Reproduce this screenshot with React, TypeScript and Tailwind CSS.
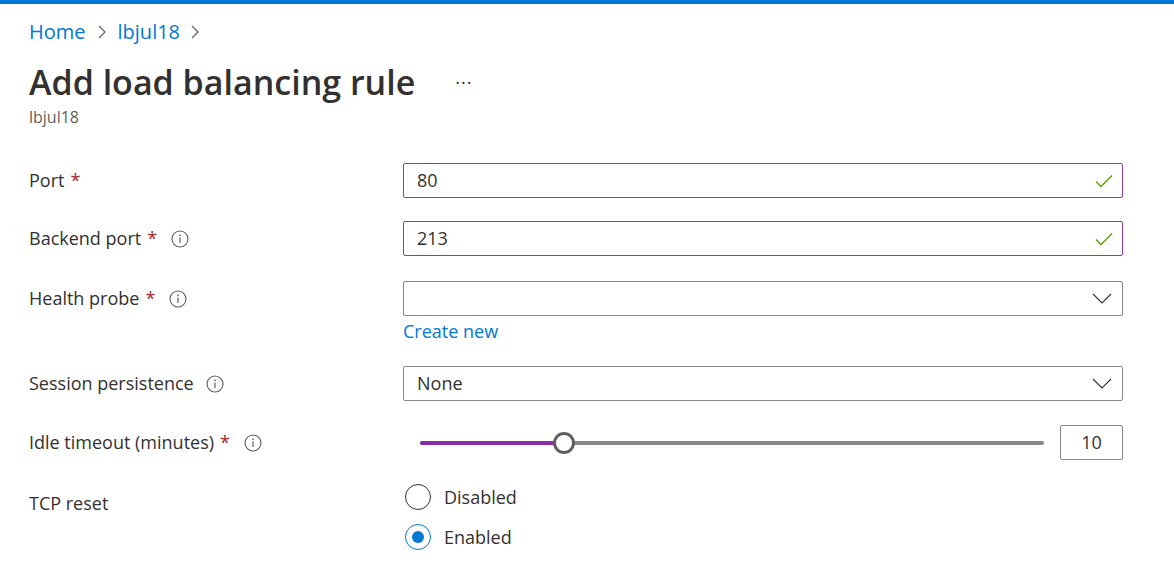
import React from 'react';

const font = { fontFamily: '"Open Sans", "Noto Sans", sans-serif' };

function Info() {
  return (
    <svg width="18" height="18" viewBox="0 0 18 18" className="shrink-0">
      <circle cx="9" cy="9" r="8" fill="none" stroke="#605e5c" strokeWidth="1.1" />
      <circle cx="9" cy="5.3" r="0.9" fill="#605e5c" />
      <line x1="9" y1="7.6" x2="9" y2="13" stroke="#605e5c" strokeWidth="1.2" />
    </svg>
  );
}

function Check() {
  return (
    <svg width="20" height="16" viewBox="0 0 20 16">
      <path d="M2 8.5 L7 13.5 L18 2.5" fill="none" stroke="#57a300" strokeWidth="1.4" />
    </svg>
  );
}

function Chevron() {
  return (
    <svg width="20" height="11" viewBox="0 0 20 11">
      <path d="M1 1 L10 10 L19 1" fill="none" stroke="#323130" strokeWidth="1.1" />
    </svg>
  );
}

function Crumb() {
  return (
    <svg width="10" height="16" viewBox="0 0 10 16">
      <path d="M2 2 L8 8 L2 14" fill="none" stroke="#605e5c" strokeWidth="1.2" />
    </svg>
  );
}

function Label({ text, required, info }: { text: string; required?: boolean; info?: boolean }) {
  return (
    <div className="w-[374px] shrink-0 h-[35px] flex items-center text-[18px] text-[#323130]">
      <span>{text}</span>
      {required && <span className="text-[#a4262c] ml-[6px]">*</span>}
      {info && (
        <span className={required ? 'ml-[14px] flex' : 'ml-[12px] flex'}>
          <Info />
        </span>
      )}
    </div>
  );
}

function TextBox({ value }: { value: string }) {
  return (
    <div className="flex-1 h-[35px] border border-[#8a3da8] rounded-[2px] flex items-center justify-between pl-[13px] pr-[8px] text-[18px] text-[#323130]">
      <span>{value}</span>
      <Check />
    </div>
  );
}

function Dropdown({ value }: { value: string }) {
  return (
    <div className="flex-1 h-[35px] border border-[#8a8886] rounded-[2px] flex items-center justify-between pl-[13px] pr-[10px] text-[18px] text-[#323130]">
      <span>{value}</span>
      <Chevron />
    </div>
  );
}

function Radio({ label, checked }: { label: string; checked?: boolean }) {
  return (
    <div className="flex items-center h-[40px] pl-[2px] text-[18px] text-[#323130]">
      <span
        className={
          checked
            ? 'w-[26px] h-[26px] rounded-full border border-[#0078d4] flex items-center justify-center'
            : 'w-[26px] h-[26px] rounded-full border border-[#323130] flex items-center justify-center'
        }
      >
        {checked && <span className="w-[12px] h-[12px] rounded-full bg-[#0078d4]" />}
      </span>
      <span className="ml-[13px]">{label}</span>
    </div>
  );
}

export default function App() {
  return (
    <div className="w-[1174px] h-[574px] bg-white overflow-hidden" style={font}>
      <div className="h-[4px] bg-[#0078d4]" />
      <div className="pl-[29px] pr-[51px]">
        <div className="flex items-center h-[24px] mt-[16px] text-[20px] text-[#0078d4]">
          <span>Home</span>
          <span className="ml-[11px] mr-[11px] flex">
            <Crumb />
          </span>
          <span>lbjul18</span>
          <span className="ml-[10px] flex">
            <Crumb />
          </span>
        </div>
        <div className="flex items-center h-[44px] mt-[16px]">
          <h1 className="text-[34px] font-semibold text-[#323130] leading-none">Add load balancing rule</h1>
          <span className="ml-[40px] text-[18px] text-[#323130] tracking-[1px]">···</span>
        </div>
        <div className="text-[16px] text-[#605e5c] h-[26px] leading-[26px]">lbjul18</div>

        <div className="mt-[33px] flex">
          <Label text="Port" required />
          <TextBox value="80" />
        </div>
        <div className="mt-[23px] flex">
          <Label text="Backend port" required info />
          <TextBox value="213" />
        </div>
        <div className="mt-[25px] flex items-start">
          <Label text="Health probe" required info />
          <div className="flex-1">
            <Dropdown value="" />
            <div className="text-[18px] text-[#0078d4] h-[30px] leading-[30px]">Create new</div>
          </div>
        </div>
        <div className="mt-[20px] flex">
          <Label text="Session persistence" info />
          <Dropdown value="None" />
        </div>
        <div className="mt-[24px] flex">
          <Label text="Idle timeout (minutes)" required info />
          <div className="flex-1 flex items-center">
            <div className="flex-1 pl-[17px] pr-[16px] flex items-center">
              <div className="relative flex-1 h-[4px] rounded-full bg-[#8a8886]">
                <div className="absolute left-0 top-0 h-[4px] w-[144px] rounded-full bg-[#8a2da5]" />
                <div className="absolute left-[133px] top-[-9px] w-[22px] h-[22px] rounded-full bg-white border-[3px] border-[#605e5c]" />
              </div>
            </div>
            <div className="w-[63px] h-[35px] border border-[#8a8886] rounded-[2px] flex items-center justify-center text-[18px] text-[#323130]">
              10
            </div>
          </div>
        </div>
        <div className="mt-[17px] flex">
          <div className="w-[374px] shrink-0 pt-[13px] text-[18px] text-[#323130]">TCP reset</div>
          <div className="flex flex-col">
            <Radio label="Disabled" />
            <Radio label="Enabled" checked />
          </div>
        </div>
      </div>
    </div>
  );
}
